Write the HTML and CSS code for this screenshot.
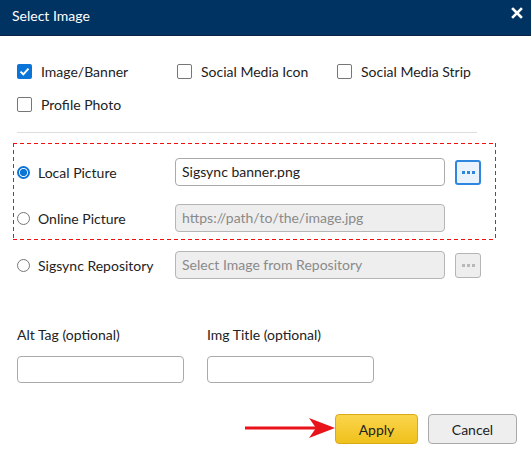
FILE: index.html
```html
<!DOCTYPE html>
<html>
<head>
<meta charset="utf-8">
<link rel="stylesheet" href="styles.css">
</head>
<body>
<div class="dialog">
  <div class="header">
    <span class="title">Select Image</span>
    <svg class="close" width="12" height="12" viewBox="0 0 12 12"><path d="M2 2 L10 10 M10 2 L2 10" stroke="#fff" stroke-width="2.6" stroke-linecap="square"/></svg>
  </div>
  <div class="content">
    <div class="checks">
      <label class="check"><span class="box checked"><svg width="15" height="15" viewBox="0 0 15 15"><path d="M3.5 7.6 L6.3 10.3 L11.5 4.6" stroke="#fff" stroke-width="2" fill="none"/></svg></span>Image/Banner</label>
      <label class="check"><span class="box"></span>Social Media Icon</label>
      <label class="check"><span class="box"></span>Social Media Strip</label>
      <label class="check"><span class="box"></span>Profile Photo</label>
    </div>
    <div class="divider"></div>
    <div class="highlight">
      <div class="row">
        <label class="radio"><span class="dot on"></span>Local Picture</label>
        <div class="input">Sigsync banner.png</div>
        <div class="more active"><i></i><i></i><i></i></div>
      </div>
      <div class="row">
        <label class="radio"><span class="dot"></span>Online Picture</label>
        <div class="input disabled">https://path/to/the/image.jpg</div>
      </div>
    </div>
    <div class="row repo">
      <label class="radio"><span class="dot"></span>Sigsync Repository</label>
      <div class="input disabled">Select Image from Repository</div>
      <div class="more"><i></i><i></i><i></i></div>
    </div>
    <div class="fields">
      <div class="field">
        <div class="flabel">Alt Tag (optional)</div>
        <div class="input small"></div>
      </div>
      <div class="field">
        <div class="flabel">Img Title (optional)</div>
        <div class="input small"></div>
      </div>
    </div>
    <div class="actions">
      <svg class="arrow" width="90" height="26" viewBox="0 0 90 26"><path d="M0 13 H76" stroke="#e8141a" stroke-width="3"/><path d="M64 3 L90 13 L64 23 L71 13 Z" fill="#e8141a"/></svg>
      <button class="btn apply">Apply</button>
      <button class="btn cancel">Cancel</button>
    </div>
  </div>
</div>
</body>
</html>
```
FILE: styles.css
```css
* { box-sizing: border-box; }
body {
  margin: 0;
  font-family: Lato, "Noto Sans", sans-serif;
  font-size: 14px;
  color: #222;
  background: #fff;
}
.header {
  height: 36px;
  background: #003262;
  border-bottom: 1px solid #0b2342;
  display: flex;
  align-items: flex-start;
  justify-content: space-between;
  padding: 7px 8px 0 12px;
  color: #fff;
}
.title { font-size: 14px; line-height: 17px; }
.close { margin-top: 0; }
.content {
  padding: 27px 14px 0 17px;
}
.checks {
  display: grid;
  grid-template-columns: 160px 160px auto;
  row-gap: 16px;
}
.check {
  display: flex;
  align-items: center;
  height: 17px;
  line-height: 17px;
}
.box {
  width: 15px;
  height: 15px;
  border: 1px solid #767676;
  border-radius: 2px;
  margin-right: 9px;
  background: #fff;
  display: flex;
}
.box.checked {
  border: none;
  background: #0b74d8;
}
.divider {
  width: 460px;
  height: 1px;
  background: #ddd;
  margin-top: 19px;
}
.highlight {
  margin: 10px 0 0 -4px;
  width: 483px;
  padding: 15px 0 8px 4px;
  display: flex;
  flex-direction: column;
  gap: 18px;
  background-image:
    repeating-linear-gradient(90deg, #f01010 0 4px, transparent 4px 7px),
    repeating-linear-gradient(90deg, #f01010 0 4px, transparent 4px 7px),
    repeating-linear-gradient(180deg, #f01010 0 4px, transparent 4px 7px),
    repeating-linear-gradient(180deg, #f01010 0 4px, transparent 4px 7px);
  background-size: 100% 1px, 100% 1px, 1px 100%, 1px 100%;
  background-position: 0 0, 0 100%, 0 0, 100% 0;
  background-repeat: no-repeat;
}
.row {
  display: flex;
  align-items: center;
  height: 28px;
}
.repo { margin-top: 11px; }
.radio {
  width: 158px;
  display: flex;
  align-items: center;
}
.dot {
  width: 13px;
  height: 13px;
  border: 1px solid #767676;
  border-radius: 50%;
  margin-right: 8px;
  background: #fff;
}
.dot.on {
  border: 2px solid #0b74d8;
  background: radial-gradient(circle, #0b74d8 0 3.4px, #fff 3.8px);
}
.input {
  width: 270px;
  height: 28px;
  border: 1px solid #aaa;
  border-radius: 4px;
  padding: 0 6px;
  line-height: 26px;
  color: #222;
  background: #fff;
}
.input.disabled {
  background: #eee;
  color: #8a8a8a;
  border-color: #b5b5b5;
}
.more {
  width: 26px;
  height: 25px;
  margin-left: 10px;
  border: 1px solid #b5b5b5;
  border-radius: 3px;
  background: #eee;
  display: flex;
  align-items: center;
  justify-content: center;
  gap: 2px;
}
.more i {
  width: 3px;
  height: 3px;
  background: #b8b8b8;
}
.more.active {
  border: 2px solid #2e86de;
  background: #eaf3fb;
}
.more.active i { background: #2e86de; }
.fields {
  display: flex;
  gap: 23px;
  margin-top: 47px;
}
.flabel {
  line-height: 17px;
  margin-bottom: 13px;
}
.input.small {
  width: 167px;
  height: 27px;
}
.actions {
  display: flex;
  justify-content: flex-end;
  align-items: center;
  margin-top: 31px;
}
.arrow { margin-top: -2px; }
.btn {
  height: 30px;
  border-radius: 4px;
  font-family: Lato, "Noto Sans", sans-serif;
  font-size: 14px;
  color: #222;
  padding: 0;
}
.apply {
  width: 83px;
  background: linear-gradient(#fbd54c, #efc11c);
  border: 1px solid #d9aa16;
}
.cancel {
  width: 89px;
  margin-left: 10px;
  background: #eee;
  border: 1px solid #aaa;
}
```
